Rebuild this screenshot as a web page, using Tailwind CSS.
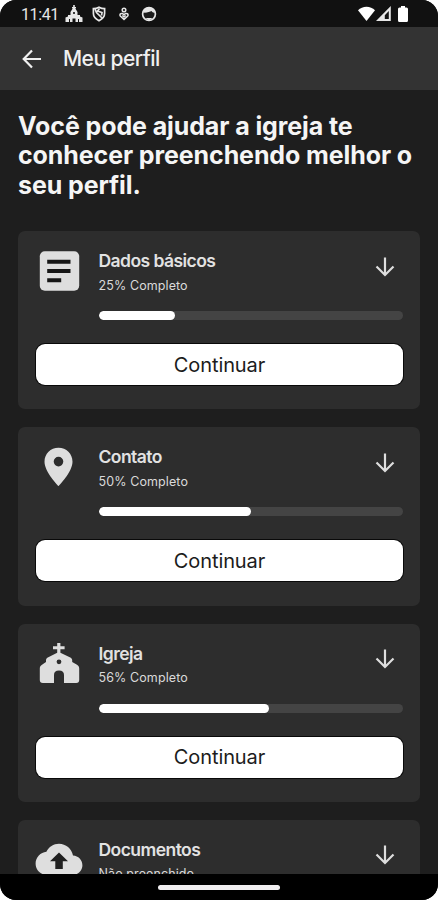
<!DOCTYPE html>
<html lang="pt-BR">

<head>
    <meta charset="UTF-8">
    <meta name="viewport" content="width=device-width, initial-scale=1.0">
    <title>Meu perfil</title>
    <script src="https://cdn.jsdelivr.net/npm/@tailwindcss/browser@4"></script>
</head>

<body class="bg-white font-['Inter',sans-serif]">

    <div class="w-[438px] h-[900px] flex flex-col overflow-hidden rounded-[16px] bg-[#1e1e1e]">

        <!-- Status bar -->
        <div class="h-[27px] shrink-0 bg-[#111111] flex items-center justify-between pl-[21px] pr-[30px] text-[#e6e6e6]">
            <div class="flex items-center h-full">
                <span class="w-[38px] mr-[6px] font-['Roboto',sans-serif] text-[16px] leading-none tracking-[-0.4px] whitespace-nowrap mt-[2px]">11:41</span>
                <svg class="w-[18px] h-[18px] mr-[9px]" viewBox="0 0 18 18" fill="currentColor">
                    <path d="M8.2 0h1.600v2h1.200v1.200h-.8L12.500 7v3H15v1.500l2.500 1V17h-3.500v-3h-1v3h-2.500v-3.500h-3V17H5v-3H4v3H.5v-4.500l2.500-1V10h2.500V7l2.300-3.800H7V2h1.200z" />
                    <circle cx="9" cy="8" r="1.100" fill="#111111" />
                </svg>
                <svg class="w-[14px] h-[16px] mr-[13px]" viewBox="0 0 14 16" fill="none" stroke="currentColor" stroke-width="1.700">
                    <path d="M7 1.200c1.800 1 3.600 1.500 5.600 1.500v4.800c0 3.300-2.300 5.600-5.600 7.200-3.300-1.600-5.600-3.900-5.600-7.200V2.700c2 0 3.800-.5 5.600-1.500z" />
                    <path d="M3 3l1.500 3.500 5.500 5.500M7.500 2.500L5.500 5l4.500 1.500-.5 3" />
                </svg>
                <svg class="w-[10px] h-[14px] mr-[12px]" viewBox="0 0 10 14" fill="none" stroke="currentColor" stroke-width="1.500">
                    <circle cx="5" cy="3" r="1.800" />
                    <path d="M5 12.500L1.300 9C0 7.200 2.500 5.300 5 7.800 7.500 5.300 10 7.200 8.700 9zM3.300 8.500L5 10l1.700-1.500" />
                </svg>
                <svg class="w-[16px] h-[16px]" viewBox="0 0 16 16">
                    <circle cx="8" cy="8" r="6.400" fill="#1a1a1a" stroke="currentColor" stroke-width="1.700" />
                    <path d="M2 6.500C3.500 2.500 5.500 1.500 8 1.500s4.500 1 6 5c-1.500.5-2.500 0-3.500-1.500C9 6 5 7 2 6.500z" fill="currentColor" />
                    <path d="M4.500 12h7L8 14.500z" fill="currentColor" />
                </svg>
            </div>
            <div class="flex items-center text-white">
                <svg class="w-[17px] h-[15px] mr-px" viewBox="0 0 17 15" fill="currentColor">
                    <path d="M8.500 15L0 4.200C2.300 2 5.200.8 8.500.8s6.200 1.200 8.500 3.400z" />
                </svg>
                <svg class="w-[15px] h-[15px] mr-[7px]" viewBox="0 0 15 15">
                    <path fill="#e6e6e6" fill-rule="evenodd" d="M14.800 0v15H0zM12.800 5L8.800 9.200V13h4z" />
                </svg>
                <svg class="w-[10px] h-[16px]" viewBox="0 0 10 16" fill="currentColor">
                    <path d="M3 0h4v1.500h1.500A1.500 1.500 0 0 1 10 3v11.500a1.500 1.500 0 0 1-1.500 1.500h-7A1.500 1.500 0 0 1 0 14.500V3a1.500 1.500 0 0 1 1.500-1.500H3z" />
                </svg>
            </div>
        </div>

        <!-- Header -->
        <header class="h-[63px] shrink-0 bg-[#333333] flex items-center pl-[22px]">
            <svg class="w-[20px] h-[20px]" viewBox="0 0 20 20" fill="none" stroke="#f0f0f0" stroke-width="2.200">
                <path d="M19 10H2.500M10 1.500L1.700 10l8.300 8.500" />
            </svg>
            <h1 class="ml-[21px] text-[21px] leading-none tracking-[-0.55px] font-medium text-[#f0f0f0]">Meu perfil</h1>
        </header>

        <!-- Content -->
        <main class="flex-1 min-h-0 overflow-hidden px-[18px] pt-[22px]">
            <h2 class="h-[119px] text-[25px] leading-[29.3px] tracking-[-0.1px] font-bold text-[#f5f5f5] whitespace-nowrap">Você pode ajudar a igreja te<br>conhecer preenchendo melhor o<br>seu perfil.</h2>

            <div id="cards" class="flex flex-col gap-[18px]"></div>
        </main>

        <!-- Navigation bar -->
        <div class="h-[26px] shrink-0 bg-black flex justify-center pt-[11px]">
            <div class="w-[122px] h-[5px] rounded-full bg-[#f0eef0]"></div>
        </div>
    </div>

    <script>
        const icons = {
            article: '<rect x="4.800" y="4.300" width="39.400" height="39.400" rx="5"/><path fill="#161616" d="M12.200 12.700h23.300v4H12.200zM12.200 22h23.300v4H12.200zM12.200 31.200h14v4h-14z"/>',
            pin: '<path fill-rule="evenodd" d="M23.500 4.800c-7.900 0-14 6.200-14 13.900C9.500 29 23.500 43 23.500 43s14-14 14-24.300c0-7.700-6.100-13.900-14-13.900zm0 9a4.800 4.800 0 1 1 0 9.600 4.800 4.800 0 0 1 0-9.600z"/>',
            church: '<path fill-rule="evenodd" d="M22.200 3h3.200v3.300h4.200v3h-4.200v3.500l9.900 4.700c1.200.6 1.900 1.500 1.900 2.800V22l4.800 2.800c1.400.8 2.200 2 2.200 3.600V40a3 3 0 0 1-3 3H29V35c0-2.800-1.500-4.500-5-4.500s-5 1.700-5 4.500v8H7.800a3 3 0 0 1-3-3V28.400c0-1.600.8-2.800 2.200-3.600l4-2.800v-1.700c0-1.300.6-2.200 1.800-2.800l9.400-4.700V9.300H18v-3h4.200zM24 19.400a2.400 2.400 0 1 0 0 4.800 2.400 2.400 0 0 0 0-4.800z"/>',
            cloud: '<path d="M38 19.600C36.600 12.800 30.900 7.800 24 7.800c-5.500 0-10.200 3.200-12.600 7.900C5.600 16.300.6 21.300.6 27.400.6 33.900 5.800 39 12.300 39h25.300c5.400 0 9.800-4.400 9.800-9.800 0-5.100-4-9.300-9.400-9.600z"/><path fill="#202020" d="M24 16.500l9 8.800h-5.200v7.700h-7.500v-7.700H15z"/>'
        };

        const sections = [
            { title: "Dados básicos", status: "25% Completo", percent: 25, icon: "article" },
            { title: "Contato", status: "50% Completo", percent: 50, icon: "pin" },
            { title: "Igreja", status: "56% Completo", percent: 56, icon: "church" },
            { title: "Documentos", status: "Não preenchido", percent: 0, icon: "cloud" }
        ];

        document.getElementById("cards").innerHTML = sections.map(s => `
            <section class="h-[178.3px] shrink-0 rounded-[7px] bg-[#2d2d2d] pl-[18px] pr-[17px] pt-4">
                <div class="flex h-[97px]">
                    <svg class="w-12 h-12 -ml-[1.500px] mr-[16px] shrink-0" viewBox="0 0 48 48" fill="#dedede">${icons[s.icon]}</svg>
                    <div class="flex-1">
                        <div class="flex justify-between h-[64px]">
                            <div>
                                <h3 class="mt-[3px] text-[17.5px] leading-[22px] tracking-[-0.55px] font-semibold text-[#e2e2e2]">${s.title}</h3>
                                <p class="mt-[5.500px] text-[12.5px] leading-4 tracking-[0.1px] text-[#dadada]">${s.status}</p>
                            </div>
                            <svg class="w-5 h-5 mt-[9.500px] mr-[8.500px]" viewBox="0 0 20 20" fill="none" stroke="#dedede" stroke-width="2.200">
                                <path d="M10 .5v17M1.500 9.500l8.500 8.500 8.500-8.500" />
                            </svg>
                        </div>
                        <div class="h-[9px] rounded-full bg-[#444444] overflow-hidden">
                            <div class="h-full rounded-full bg-white" style="width: ${s.percent}%"></div>
                        </div>
                    </div>
                </div>
                <button class="block w-full h-[41px] rounded-[9px] bg-white ring-1 ring-black/80 text-[20px] leading-none tracking-[-0.1px] text-[#1c1c1c]">Continuar</button>
            </section>`).join("");
    </script>

</body>

</html>
